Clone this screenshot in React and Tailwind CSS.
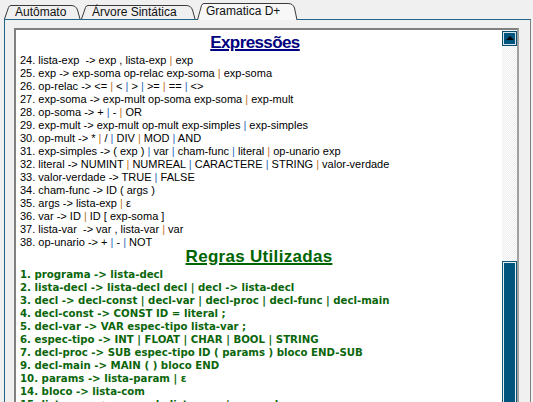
const EXPRESSOES = [
  ["24. lista-exp  -> exp , lista-exp | exp", "o"],
  ["25. exp -> exp-soma op-relac exp-soma | exp-soma", "o"],
  ["26. op-relac -> <= | < | > | >= | == | <>", "obbob"],
  ["27. exp-soma -> exp-mult op-soma exp-soma | exp-mult", "o"],
  ["28. op-soma -> + | - | OR", "bo"],
  ["29. exp-mult -> exp-mult op-mult exp-simples | exp-simples", "b"],
  ["30. op-mult -> * | / | DIV | MOD | AND", "obob"],
  ["31. exp-simples -> ( exp ) | var | cham-func | literal | op-unario exp", "bbbo"],
  ["32. literal -> NUMINT | NUMREAL | CARACTERE | STRING | valor-verdade", "obbo"],
  ["33. valor-verdade -> TRUE | FALSE", "b"],
  ["34. cham-func -> ID ( args )", ""],
  ["35. args -> lista-exp | ε", "o"],
  ["36. var -> ID | ID [ exp-soma ]", "o"],
  ["37. lista-var  -> var , lista-var | var", "o"],
  ["38. op-unario -> + | - | NOT", "bb"],
];

const REGRAS = [
  "1. programa -> lista-decl",
  "2. lista-decl -> lista-decl decl | decl -> lista-decl",
  "3. decl -> decl-const | decl-var | decl-proc | decl-func | decl-main",
  "4. decl-const -> CONST ID = literal ;",
  "5. decl-var -> VAR espec-tipo lista-var ;",
  "6. espec-tipo -> INT | FLOAT | CHAR | BOOL | STRING",
  "7. decl-proc -> SUB espec-tipo ID ( params ) bloco END-SUB",
  "9. decl-main -> MAIN ( ) bloco END",
  "10. params -> lista-param | ε",
  "14. bloco -> lista-com",
  "15. lista-com -> comando lista-com | comando",
];

function Tab({ label, width, active, pad }) {
  const h = active ? 17 : 14;
  const d = `M0.5 ${h} L4.5 2.5 Q5.2 0.5 7 0.5 H${width - 10} Q${width - 5} 0.5 ${width - 3.5} 5 L${width - 1} ${h}`;
  return (
    <div
      className={
        active
          ? "relative z-10 -mb-px ml-px h-[17px] pt-px"
          : "relative h-[14px]"
      }
      style={{ width }}
    >
      <svg
        className="absolute left-0 top-0"
        width={width}
        height={h}
        viewBox={`0 0 ${width} ${h}`}
      >
        <path d={d + " Z"} fill={active ? "#f7f7f7" : "#f0f0f0"} stroke="none" />
        <path d={d} fill="none" stroke="#3a3a3a" strokeWidth="1" />
      </svg>
      <span
        className="relative block text-[12px] leading-[15px] text-[#111]"
        style={{ paddingLeft: pad }}
      >
        {label}
      </span>
    </div>
  );
}

function ExprLine({ text, pipes }) {
  const parts = text.split("|");
  return (
    <div className="whitespace-pre">
      {parts.map((p, i) => (
        <span key={i}>
          {p}
          {i < parts.length - 1 && (
            <span className={pipes[i] === "b" ? "text-[#2f6db8]" : "text-[#c0742a]"}>|</span>
          )}
        </span>
      ))}
    </div>
  );
}

export default function App() {
  return (
    <div className="h-[402px] w-[533px] overflow-hidden bg-[#f0f0f0] font-['Liberation_Sans',Arial,sans-serif]">
      <div className="flex h-[19px] items-end pl-[4px]">
        <Tab label="Autômato" width={77} pad={11} />
        <Tab label="Árvore Sintática" width={115} pad={11} />
        <Tab label="Gramatica D+" width={101} pad={9} active />
      </div>

      <div className="ml-[4px] h-[383px] w-[527px] overflow-hidden border-l border-r border-t border-l-[#1f6688] border-r-[#808080] border-t-[#1f6688] pl-[9px] pt-[8px]">
        <div className="flex h-[400px] w-[505px] border-2 border-b-[#a0a0a0] border-l-[#808080] border-r-[#a0a0a0] border-t-[#808080] bg-white">
          <div className="w-[486px] overflow-hidden pl-[4px] pt-[5px] text-[11px] leading-[13px] text-black">
            <h2 className="pr-[12px] text-center text-[17px] font-bold leading-[16px] tracking-[-0.6px] text-[#000080] underline decoration-[1.5px] underline-offset-[1px]">
              Expressões
            </h2>
            <div className="mt-[3px]">
              {EXPRESSOES.map(([t, p]) => (
                <ExprLine key={t} text={t} pipes={p} />
              ))}
            </div>
            <h2 className="pr-[4px] text-center text-[17px] font-bold leading-[16px] tracking-[0.3px] text-[#006400] underline decoration-[1.5px] underline-offset-[1px]">
              Regras Utilizadas
            </h2>
            <div className="mt-[3px] font-['DejaVu_Sans',Verdana,sans-serif] text-[10.2px] font-bold text-[#0b660b]">
              {REGRAS.map((t) => (
                <div key={t} className="whitespace-pre">
                  {t}
                </div>
              ))}
            </div>
          </div>

          <div className="flex w-[15px] flex-col bg-[repeating-conic-gradient(#ececec_0%_25%,#ffffff_0%_50%)] bg-[length:2px_2px] pt-px">
            <div className="flex h-[15px] w-[15px] items-center justify-center border border-[#0b4d6e] bg-[#00557f] shadow-[inset_0_0_0_1px_#d6e4ec]">
              <div className="-mt-px h-0 w-0 border-b-[4px] border-l-[4px] border-r-[4px] border-b-black border-l-transparent border-r-transparent" />
            </div>
            <div className="h-[215px]" />
            <div className="flex-1 border border-[#0b5579] bg-[#00557f] shadow-[inset_0_0_0_1px_#e8f0f4]" />
          </div>
        </div>
      </div>
    </div>
  );
}
